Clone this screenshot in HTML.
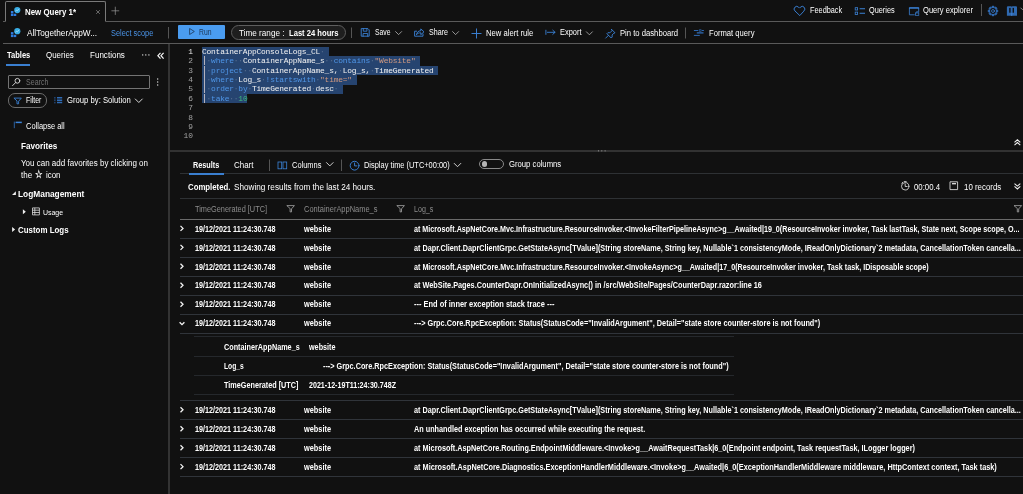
<!DOCTYPE html>
<html lang="en">
<head>
<meta charset="utf-8">
<title>Logs</title>
<style>
*{box-sizing:border-box;margin:0;padding:0}
html,body{width:1023px;height:494px;overflow:hidden;background:#111111}
body{position:relative;font-family:"Liberation Sans",sans-serif;color:#fff;-webkit-font-smoothing:antialiased}
.t{position:absolute;white-space:pre;line-height:12px;height:12px;transform-origin:0 50%}
.m{font-family:"Liberation Mono",monospace}
#app{position:absolute;left:0;top:0;width:1023px;height:494px;will-change:transform}
.a{position:absolute}
svg{position:absolute;overflow:visible}
</style>
</head>
<body>
<div id="app">
<style>
.hl{position:absolute;height:1px;background:#30343a}
.cl{position:absolute;left:202px;height:10px;line-height:10px;font-size:7.9px;letter-spacing:-0.196px;white-space:pre;color:#f2f2f2}
.ln{position:absolute;left:172px;width:20.7px;text-align:right;height:10px;line-height:10px;font-size:7.9px;letter-spacing:-0.196px;color:#a2a2a2}
.cl i{font-style:normal;color:rgba(255,255,255,.22)}.p{display:inline-block;transform:scaleY(1.2);color:#f6e6e2}
.k{color:#4f96e8}.s{color:#cf9880}.n{color:#3fba7c}
</style>
<!-- tab strip -->
<div class="a" style="left:2.5px;top:21px;width:1020.5px;height:1px;background:#5a5a5a"></div>
<div class="a" style="left:5px;top:1px;width:101px;height:21px;border:1px solid #7a7a7a;border-bottom:1px solid #111;border-radius:2px 2px 0 0;background:#111"></div>
<div class="a" style="left:2.5px;top:43px;width:1020.5px;height:1px;background:#5a5a5a"></div>
<!-- left/right splitter -->
<div class="a" style="left:168px;top:44px;width:2px;height:450px;background:#333"></div>
<!-- run button & time pill -->
<div class="a" style="left:178px;top:25px;width:47px;height:14px;background:#4a9cf0;border-radius:1px"></div>
<div class="a" style="left:231px;top:25px;width:114.5px;height:14.5px;border:1px solid #5e5e5e;border-radius:8px;background:#1e1e1e"></div>
<!-- search box & filter pill -->
<div class="a" style="left:8.3px;top:75.2px;width:141.7px;height:13.4px;border:1px solid #747474;border-radius:1px"></div>
<div class="a" style="left:8.3px;top:93.2px;width:38.7px;height:14.4px;border:1px solid #6e6e6e;border-radius:7px"></div>
<div class="a" style="left:6px;top:64px;width:24px;height:2px;background:#3a7fd0"></div>
<!-- editor -->
<svg width="1023" height="494" viewBox="0 0 1023 494" style="left:0;top:0" shape-rendering="crispEdges">
<g fill="#264470">
<rect x="202" y="46.80" width="127.26" height="9.7"/>
<rect x="202" y="56.20" width="218.16" height="9.7"/>
<rect x="202" y="65.60" width="236.34" height="9.7"/>
<rect x="202" y="75.00" width="154.53" height="9.7"/>
<rect x="202" y="84.40" width="140.90" height="9.7"/>
<rect x="202" y="93.80" width="45.45" height="9.4"/>
</g>
</svg>
<span class="ln m" style="top:46.70px;color:#e6e6e6">1</span>
<span class="ln m" style="top:56.10px">2</span>
<span class="ln m" style="top:65.50px">3</span>
<span class="ln m" style="top:74.90px">4</span>
<span class="ln m" style="top:84.30px">5</span>
<span class="ln m" style="top:93.70px">6</span>
<span class="ln m" style="top:103.10px">7</span>
<span class="ln m" style="top:112.50px">8</span>
<span class="ln m" style="top:121.90px">9</span>
<span class="ln m" style="top:131.30px">10</span>
<span class="cl m" style="top:46.70px">ContainerAppConsoleLogs_CL<i>·</i></span>
<span class="cl m" style="top:56.10px"><span class="p">|</span><i>·</i><span class="k">where</span><i>·</i><i>·</i>ContainerAppName_s<i>·</i><i>·</i><span class="k">contains</span><i>·</i><span class="s">"Website"</span></span>
<span class="cl m" style="top:65.50px"><span class="p">|</span><i>·</i><span class="k">project</span><i>·</i><i>·</i>ContainerAppName_s,<i>·</i>Log_s,<i>·</i>TimeGenerated</span>
<span class="cl m" style="top:74.90px"><span class="p">|</span><i>·</i><span class="k">where</span><i>·</i>Log_s<i>·</i><span class="k">!startswith</span><i>·</i><span class="s">"time="</span></span>
<span class="cl m" style="top:84.30px"><span class="p">|</span><i>·</i><span class="k">order</span><i>·</i><span class="k">by</span><i>·</i>TimeGenerated<i>·</i>desc<i>·</i></span>
<span class="cl m" style="top:93.70px"><span class="p">|</span><i>·</i><span class="k">take</span><i>·</i><i>·</i><span class="n">10</span></span>
<!-- editor/results splitter -->
<div class="a" style="left:170px;top:149.6px;width:853px;height:2.6px;background:#323232"></div>
<!-- results lines -->
<div class="hl" style="left:179.5px;top:173.4px;width:843.5px;background:#2e3134"></div>
<div class="a" style="left:188.5px;top:173px;width:35.3px;height:1.5px;background:#3a7fd0"></div>
<div class="hl" style="left:179.5px;top:198px;width:843.5px;background:#2e3134"></div>
<div class="hl" style="left:179.5px;top:219px;width:843.5px;background:#6a6a6a"></div>
<div class="hl" style="left:179.5px;top:238px;width:843.5px"></div>
<div class="hl" style="left:179.5px;top:257px;width:843.5px"></div>
<div class="hl" style="left:179.5px;top:276px;width:843.5px"></div>
<div class="hl" style="left:179.5px;top:295px;width:843.5px"></div>
<div class="hl" style="left:179.5px;top:314px;width:843.5px"></div>
<div class="hl" style="left:179.5px;top:333px;width:843.5px"></div>
<div class="hl" style="left:194.4px;top:336.3px;width:539.2px;background:#25282c"></div>
<div class="hl" style="left:194.4px;top:356.1px;width:539.2px;background:#25282c"></div>
<div class="hl" style="left:194.4px;top:374.8px;width:539.2px;background:#25282c"></div>
<div class="hl" style="left:194.4px;top:393.5px;width:539.2px;background:#25282c"></div>
<div class="hl" style="left:179.5px;top:399.8px;width:843.5px"></div>
<div class="hl" style="left:179.5px;top:418.8px;width:843.5px"></div>
<div class="hl" style="left:179.5px;top:437.8px;width:843.5px"></div>
<div class="hl" style="left:179.5px;top:456.9px;width:843.5px"></div>
<div class="hl" style="left:179.5px;top:475.8px;width:843.5px"></div>
<!-- toggle -->
<div class="a" style="left:478.9px;top:158.6px;width:24.9px;height:10.7px;border:1px solid #8a8a8a;border-radius:5.4px"></div>
<div class="a" style="left:481.9px;top:161.3px;width:5.4px;height:5.4px;background:#b4b4b4;border-radius:50%"></div>
<!-- ICONS -->
<svg width="1023" height="494" viewBox="0 0 1023 494" style="left:0;top:0" fill="none" stroke-linecap="round" stroke-linejoin="round">
<!-- separators -->
<g stroke="#555" stroke-width="1" stroke-linecap="butt">
<path d="M168.5 27V38.5M351.5 27.5V38M685.5 27.5V38.5M981.5 4V16M269.5 159.5V171M341.5 159.5V171"/>
</g>
<!-- ICONS-BEGIN -->
<!-- app icons (tab + scope) -->
<g>
<circle cx="17.300" cy="10.100" r="3.100" fill="#38aee6" stroke="none"/>
<path d="M15.6 11.2l1-1.2.9.7 1.2-1.6" stroke="#d8f0ff" stroke-width=".6"/>
<g fill="#2f7de0" stroke="none"><rect x="10.900" y="11" width="2.500" height="2.400"/><rect x="10.900" y="13.700" width="2.500" height="2.300"/><rect x="13.750" y="13.700" width="2.500" height="2.300"/></g>
</g>
<g transform="translate(0 21.1)">
<circle cx="17.300" cy="10.100" r="3.100" fill="#38aee6" stroke="none"/>
<path d="M15.6 11.2l1-1.2.9.7 1.2-1.6" stroke="#d8f0ff" stroke-width=".6"/>
<g fill="#2f7de0" stroke="none"><rect x="10.900" y="11" width="2.500" height="2.400"/><rect x="10.900" y="13.700" width="2.500" height="2.300"/><rect x="13.750" y="13.700" width="2.500" height="2.300"/></g>
</g>
<!-- tab close + new tab -->
<path d="M96.400 10.400l3.200 3.200M99.600 10.400l-3.200 3.200" stroke="#8c8c8c" stroke-width=".7"/>
<path d="M115.300 7.100v7.400M111.800 10.800h7" stroke="#9a9a9a" stroke-width=".7"/>
<!-- heart -->
<path d="M799.5 15.3l-4.6-4.4a2.6 2.6 0 0 1 0-3.7 2.6 2.6 0 0 1 3.7 0l.9.9.9-.9a2.6 2.6 0 0 1 3.7 0 2.6 2.6 0 0 1 0 3.7z" stroke="#3b83d8" stroke-width=".95"/>
<!-- queries icon -->
<g stroke="#3b83d8" stroke-width=".8" stroke-linejoin="miter"><rect x="855.200" y="7.700" width="2.400" height="2.300"/><rect x="855.200" y="12.100" width="2.400" height="2.300"/><path d="M859.600 8.800h5.400M859.600 13.200h5.400" stroke-width="1.050" stroke-linecap="butt"/></g>
<!-- query explorer icon -->
<g stroke="#3b83d8" stroke-width=".8" stroke-linejoin="miter"><path d="M914.300 14.800h-4.900V7.500h9.300v4.200"/><path d="M909.400 8.300h9.300" stroke-width=".9"/><rect x="915.600" y="12.900" width="3.200" height="2.400" stroke-width=".7"/><path d="M916.300 12.900v-.6a.9.900 0 0 1 1.800 0v.6" stroke-width=".6"/></g>
<!-- gear -->
<g><path d="M991.85 7.27L992.01 6.10L993.99 6.10L994.15 7.27L994.82 7.55L995.76 6.83L997.17 8.24L996.45 9.18L996.73 9.85L997.90 10.01L997.90 11.99L996.73 12.15L996.45 12.82L997.17 13.76L995.76 15.17L994.82 14.45L994.15 14.73L993.99 15.90L992.01 15.90L991.85 14.73L991.18 14.45L990.24 15.17L988.83 13.76L989.55 12.82L989.27 12.15L988.10 11.99L988.10 10.01L989.27 9.85L989.55 9.18L988.83 8.24L990.24 6.83L991.18 7.55z" fill="#2f69b0" stroke="#2f69b0" stroke-width=".5"/><circle cx="993.0" cy="11.0" r="2.9" fill="#111"/><circle cx="993.0" cy="11.0" r="1.45" stroke="#3b7fd0" stroke-width=".8"/></g>
<!-- book -->
<g><path d="M1006.9 7.3q0-1 1-1h3.2l.65.5.65-.5h3.600q1 0 1 1v8.500h-10.100z" fill="#2f69b0"/><rect x="1009.200" y="7.900" width="1.400" height="4.800" fill="#111"/><rect x="1012.600" y="7.900" width="1.400" height="4.800" fill="#111"/><path d="M1011.750 13.400v2.200" stroke="#4a90e2" stroke-width=".7"/></g>
<path d="M1020.800 8l1.600 1.600 1.600-1.600" stroke="#aaa" stroke-width=".8"/>
<!-- run play -->
<path d="M189.600 28.900v5.600l4.400-2.800z" stroke="#1c3554" stroke-width=".8"/>
<!-- save -->
<g stroke="#3b83d8" stroke-width=".9"><path d="M361.6 28.6h6.3l1.3 1.3v6.3h-7.6z"/><path d="M363.3 28.6v2.6h3.6v-2.6" stroke-width=".85"/><path d="M363.1 36.2v-2.7h4.6v2.7" stroke-width=".85"/></g>
<!-- chevrons (toolbar) -->
<g stroke="#b8b8b8" stroke-width=".8"><path d="M395.6 31.6l3 3 3-3M452.6 31.6l3 3 3-3M586.4 31.8l3 3 3-3"/></g>
<!-- share -->
<g stroke="#3b83d8" stroke-width=".9"><path d="M416.6 31.2h-2v5h8.4v-2.2"/><path d="M416.6 34.4c.3-2.4 1.8-3.6 4.2-3.6v-1.9l3.2 2.9-3.2 2.9v-1.9c-1.9 0-3.2.5-4.2 1.600z"/></g>
<!-- plus -->
<path d="M476.5 28.9v9.2M471.9 33.5h9.2" stroke="#3b83d8" stroke-width=".95"/>
<!-- export -->
<path d="M545.9 30.2v4.2M547.4 32.3h7.6M552.8 30.2l2.2 2.1-2.2 2.100" stroke="#3b83d8" stroke-width=".9"/>
<!-- pin -->
<g stroke="#3b83d8" stroke-width=".9"><path d="M611.600 29.4l3.400 3.400-1 .3-1.900 1.900.1 2-1 1-4.300-4.300 1-1 2 .1 1.900-1.900z"/><path d="M608.500 35.300l-2.800 2.800"/></g>
<!-- format -->
<g stroke="#3273c4" stroke-width=".9" stroke-linecap="butt"><path d="M693.900 30.500h4.300M701.900 30.500h2M693.900 35.400h5.900"/><path d="M696.800 32.900h6.700" stroke-width="1.200"/><rect x="699.300" y="29.700" width="1.900" height="1.700" stroke-width=".6"/></g>
<!-- left: ellipsis, collapse chevrons -->
<g fill="#e6e6e6" stroke="none"><circle cx="142.700" cy="54.900" r=".7"/><circle cx="145.800" cy="54.900" r=".7"/><circle cx="148.900" cy="54.900" r=".7"/>
<circle cx="157.700" cy="79" r=".65"/><circle cx="157.700" cy="82" r=".65"/><circle cx="157.700" cy="85" r=".65"/></g>
<path d="M160.500 52.800l-2.600 2.900 2.600 2.900M163.600 52.800l-2.600 2.900 2.600 2.900" stroke="#f4f4f4" stroke-width="1.250" stroke-linecap="butt" stroke-linejoin="miter"/>
<!-- search icon -->
<g stroke="#e0e0e0" stroke-width=".9"><circle cx="17.400" cy="80.800" r="2.400"/><path d="M15.600 82.600l-3 3"/></g>
<!-- filter funnel -->
<path d="M14.300 98.100h7l-2.700 3.200v2.500h-1.600v-2.500z" stroke="#3b83d8" stroke-width=".9"/>
<!-- group icon -->
<g stroke="#2f6bb5" stroke-width="1.500" stroke-linecap="butt"><path d="M57 97.800h5.200M57 100.200h5.200M57 102.600h5.200"/><path d="M54.900 97v6.400" stroke="#2a5fa3" stroke-width="1" stroke-dasharray="1.600 .8"/></g>
<path d="M135.300 99l3.500 3.500 3.500-3.500" stroke="#d8d8d8" stroke-width="1"/>
<!-- collapse all icon -->
<path d="M14.300 121.600v6.600" stroke="#2f6bb4" stroke-width=".9" stroke-linecap="butt"/><path d="M15.600 122.400h6.200" stroke="#3b83d8" stroke-width="1.500" stroke-linecap="butt"/>
<!-- tree arrows -->
<g fill="#f0f0f0" stroke="none"><path d="M15.900 191.200v3.800h-3.900z"/><path d="M22.900 209.200l2.900 2.500-2.900 2.500z"/><path d="M12.100 226.900l3 2.600-3 2.600z"/></g>
<!-- table icon -->
<g stroke="#e8e8e8" stroke-width=".75" stroke-linecap="butt"><rect x="32.500" y="207.900" width="6.900" height="7"/><path d="M32.500 210.200h6.900M32.500 212.500h6.900M34.800 207.900v7"/></g>
<!-- columns icon -->
<g stroke="#3b83d8" stroke-width=".8" stroke-linejoin="miter"><rect x="278" y="162" width="3.700" height="6.800"/><rect x="283" y="162" width="3.700" height="6.800"/></g>
<path d="M326.500 162.600l3.300 3.300 3.300-3.300M454.200 163.400l3.300 3.300 3.300-3.300" stroke="#d8d8d8" stroke-width=".95"/>
<!-- clock -->
<g stroke="#3b83d8" stroke-width=".95"><circle cx="354.600" cy="165.700" r="4.400"/><path d="M354.600 163v2.900h2.300"/></g>
<!-- header filter icons -->
<g stroke="#a8a8a8" stroke-width=".8"><path d="M287.200 205.600h7.200l-2.900 3.300v3h-1.400v-3z"/><path d="M397.200 205.600h7.200l-2.900 3.300v3h-1.400v-3z"/><path d="M1014.400 205.600h7.200l-2.900 3.300v3h-1.400v-3z"/></g>
<!-- double chevrons -->
<g stroke="#f0f0f0" stroke-width="1.100" stroke-linecap="butt" stroke-linejoin="miter"><path d="M1014.500 142.300l2.900-2.500 2.900 2.500M1014.500 145.100l2.900-2.500 2.900 2.500"/><path d="M1014.500 183.600l2.900 2.500 2.900-2.500M1014.500 186.400l2.900 2.500 2.900-2.500"/></g>
<!-- stopwatch -->
<g stroke="#e0e0e0" stroke-width=".85"><circle cx="905.200" cy="186.300" r="3.700"/><path d="M905.200 184v2.500h1.900M904.200 181.600h2M901.800 183.200l.9-.9"/></g>
<!-- records icon -->
<g stroke="#e0e0e0" stroke-width=".85"><rect x="950.400" y="181.800" width="7.200" height="7.800"/><path d="M952 183.700h4" stroke-width="1.300" stroke-linecap="butt"/></g>
<!-- splitter dots -->
<g fill="#9a9a9a" stroke="none"><circle cx="598.500" cy="150.800" r=".6"/><circle cx="601.800" cy="150.800" r=".6"/><circle cx="605.100" cy="150.800" r=".6"/></g>
<!-- row chevrons -->
<g stroke="#f4f4f4" stroke-width="1.300" stroke-linecap="butt" stroke-linejoin="miter">
<path d="M180.500 225.900l2.500 2.500-2.500 2.500"/>
<path transform="translate(0 18.95)" d="M180.500 225.900l2.500 2.500-2.500 2.500"/><path transform="translate(0 37.9)" d="M180.500 225.900l2.500 2.500-2.500 2.500"/><path transform="translate(0 56.85)" d="M180.500 225.900l2.500 2.500-2.500 2.500"/><path transform="translate(0 75.8)" d="M180.500 225.900l2.500 2.500-2.500 2.500"/>
<path d="M179.600 322.300l2.400 2.400 2.400-2.400"/>
<path transform="translate(0 181.4)" d="M180.500 225.900l2.500 2.500-2.500 2.500"/><path transform="translate(0 200.35)" d="M180.500 225.900l2.500 2.500-2.500 2.500"/><path transform="translate(0 219.3)" d="M180.500 225.900l2.500 2.500-2.500 2.500"/><path transform="translate(0 238.25)" d="M180.500 225.900l2.500 2.500-2.500 2.500"/>
</g>
<!-- ICONS-END -->
</svg>

<span class="t" style="left:25px;top:6.00px;font-size:8.3px;color:#ffffff;font-weight:700;transform:scaleX(0.9533);">New Query 1*</span>
<span class="t" style="left:809.5px;top:4.30px;font-size:8.3px;color:#ffffff;transform:scaleX(0.8837);">Feedback</span>
<span class="t" style="left:869.3px;top:4.30px;font-size:8.3px;color:#ffffff;transform:scaleX(0.8843);">Queries</span>
<span class="t" style="left:923px;top:4.30px;font-size:8.3px;color:#ffffff;transform:scaleX(0.9112);">Query explorer</span>
<span class="t" style="left:26.7px;top:27.00px;font-size:8.8px;color:#ffffff;transform:scaleX(0.9357);">AllTogetherAppW...</span>
<span class="t" style="left:110.75px;top:27.00px;font-size:8.3px;color:#4a93e6;transform:scaleX(0.8892);">Select scope</span>
<span class="t" style="left:198.75px;top:25.50px;font-size:8.3px;color:#1c3554;transform:scaleX(0.8205);">Run</span>
<span class="t" style="left:238.75px;top:27.40px;font-size:8.3px;color:#ffffff;transform:scaleX(0.9835);">Time range :</span>
<span class="t" style="left:288.5px;top:27.40px;font-size:8.3px;color:#ffffff;font-weight:700;transform:scaleX(0.9175);">Last 24 hours</span>
<span class="t" style="left:374.5px;top:26.00px;font-size:8.3px;color:#ffffff;transform:scaleX(0.8192);">Save</span>
<span class="t" style="left:428.5px;top:26.00px;font-size:8.3px;color:#ffffff;transform:scaleX(0.8582);">Share</span>
<span class="t" style="left:485.75px;top:26.75px;font-size:8.3px;color:#ffffff;transform:scaleX(0.9231);">New alert rule</span>
<span class="t" style="left:559.5px;top:26.00px;font-size:8.3px;color:#ffffff;transform:scaleX(0.8964);">Export</span>
<span class="t" style="left:619.5px;top:27.00px;font-size:8.3px;color:#ffffff;transform:scaleX(0.9245);">Pin to dashboard</span>
<span class="t" style="left:708.5px;top:27.00px;font-size:8.3px;color:#ffffff;transform:scaleX(0.9221);">Format query</span>
<span class="t" style="left:6.7px;top:49.40px;font-size:8.3px;color:#ffffff;font-weight:700;transform:scaleX(0.9076);">Tables</span>
<span class="t" style="left:45.7px;top:49.40px;font-size:8.3px;color:#ffffff;transform:scaleX(0.9566);">Queries</span>
<span class="t" style="left:89.7px;top:49.40px;font-size:8.3px;color:#ffffff;transform:scaleX(0.9699);">Functions</span>
<span class="t" style="left:26px;top:76.20px;font-size:8.3px;color:#727272;transform:scaleX(0.8518);">Search</span>
<span class="t" style="left:25.7px;top:94.30px;font-size:8.3px;color:#ffffff;transform:scaleX(0.8298);">Filter</span>
<span class="t" style="left:66.5px;top:94.30px;font-size:8.3px;color:#ffffff;transform:scaleX(0.9268);">Group by: Solution</span>
<span class="t" style="left:25.8px;top:119.80px;font-size:8.3px;color:#ffffff;transform:scaleX(0.9023);">Collapse all</span>
<span class="t" style="left:21px;top:140.30px;font-size:8.3px;color:#ffffff;font-weight:700;transform:scaleX(0.9867);">Favorites</span>
<span class="t" style="left:21px;top:157.20px;font-size:8.3px;color:#ffffff;transform:scaleX(0.9650);">You can add favorites by clicking on</span>
<span class="t" style="left:20.7px;top:168.80px;font-size:8.3px;color:#ffffff;transform:scaleX(0.9613);">the</span>
<span class="t" style="left:35.4px;top:168.00px;font-size:10.5px;color:#ffffff;font-weight:700;transform:scaleX(0.7600);">☆</span>
<span class="t" style="left:46.1px;top:168.80px;font-size:8.3px;color:#ffffff;transform:scaleX(0.9518);">icon</span>
<span class="t" style="left:18.4px;top:187.50px;font-size:8.3px;color:#ffffff;font-weight:700;transform:scaleX(1.0057);">LogManagement</span>
<span class="t" style="left:42.9px;top:206.70px;font-size:7.8px;color:#ffffff;transform:scaleX(0.8915);">Usage</span>
<span class="t" style="left:18.4px;top:223.80px;font-size:8.3px;color:#ffffff;font-weight:700;transform:scaleX(0.9544);">Custom Logs</span>
<span class="t" style="left:193.25px;top:158.75px;font-size:8.3px;color:#ffffff;font-weight:700;transform:scaleX(0.8755);">Results</span>
<span class="t" style="left:233.75px;top:158.75px;font-size:8.3px;color:#ffffff;transform:scaleX(0.9607);">Chart</span>
<span class="t" style="left:291.5px;top:158.75px;font-size:8.3px;color:#ffffff;transform:scaleX(0.9008);">Columns</span>
<span class="t" style="left:363.75px;top:159.00px;font-size:8.3px;color:#ffffff;transform:scaleX(0.8956);">Display time (UTC+00:00)</span>
<span class="t" style="left:508.8px;top:157.50px;font-size:8.3px;color:#ffffff;transform:scaleX(0.9277);">Group columns</span>
<span class="t" style="left:188.25px;top:180.75px;font-size:8.3px;color:#ffffff;font-weight:700;transform:scaleX(0.9405);">Completed.</span>
<span class="t" style="left:233.75px;top:180.75px;font-size:8.3px;color:#ffffff;transform:scaleX(0.9849);">Showing results from the last 24 hours.</span>
<span class="t" style="left:914px;top:180.60px;font-size:8.3px;color:#ffffff;transform:scaleX(0.9391);">00:00.4</span>
<span class="t" style="left:963.7px;top:180.60px;font-size:8.3px;color:#ffffff;transform:scaleX(0.9515);">10 records</span>
<span class="t" style="left:194.5px;top:202.75px;font-size:8.3px;color:#8d8d8d;transform:scaleX(0.8855);">TimeGenerated [UTC]</span>
<span class="t" style="left:303.5px;top:202.75px;font-size:8.3px;color:#8d8d8d;transform:scaleX(0.9003);">ContainerAppName_s</span>
<span class="t" style="left:414.2px;top:202.75px;font-size:8.3px;color:#8d8d8d;transform:scaleX(0.8536);">Log_s</span>
<span class="t" style="left:194.9px;top:222.60px;font-size:8.3px;color:#ffffff;font-weight:700;transform:scaleX(0.8691);">19/12/2021 11:24:30.748</span>
<span class="t" style="left:303.7px;top:222.60px;font-size:8.3px;color:#ffffff;font-weight:700;transform:scaleX(0.8871);">website</span>
<span class="t" style="left:414.2px;top:222.60px;font-size:8.3px;color:#ffffff;font-weight:700;transform:scaleX(0.8646);">at Microsoft.AspNetCore.Mvc.Infrastructure.ResourceInvoker.&lt;InvokeFilterPipelineAsync&gt;g__Awaited|19_0(ResourceInvoker invoker, Task lastTask, State next, Scope scope, O...</span>
<span class="t" style="left:194.9px;top:241.50px;font-size:8.3px;color:#ffffff;font-weight:700;transform:scaleX(0.8691);">19/12/2021 11:24:30.748</span>
<span class="t" style="left:303.7px;top:241.50px;font-size:8.3px;color:#ffffff;font-weight:700;transform:scaleX(0.8871);">website</span>
<span class="t" style="left:414.2px;top:241.50px;font-size:8.3px;color:#ffffff;font-weight:700;transform:scaleX(0.8731);">at Dapr.Client.DaprClientGrpc.GetStateAsync[TValue](String storeName, String key, Nullable`1 consistencyMode, IReadOnlyDictionary`2 metadata, CancellationToken cancella...</span>
<span class="t" style="left:194.9px;top:260.50px;font-size:8.3px;color:#ffffff;font-weight:700;transform:scaleX(0.8691);">19/12/2021 11:24:30.748</span>
<span class="t" style="left:303.7px;top:260.50px;font-size:8.3px;color:#ffffff;font-weight:700;transform:scaleX(0.8871);">website</span>
<span class="t" style="left:414.2px;top:260.50px;font-size:8.3px;color:#ffffff;font-weight:700;transform:scaleX(0.8655);">at Microsoft.AspNetCore.Mvc.Infrastructure.ResourceInvoker.&lt;InvokeAsync&gt;g__Awaited|17_0(ResourceInvoker invoker, Task task, IDisposable scope)</span>
<span class="t" style="left:194.9px;top:279.40px;font-size:8.3px;color:#ffffff;font-weight:700;transform:scaleX(0.8691);">19/12/2021 11:24:30.748</span>
<span class="t" style="left:303.7px;top:279.40px;font-size:8.3px;color:#ffffff;font-weight:700;transform:scaleX(0.8871);">website</span>
<span class="t" style="left:414.2px;top:279.40px;font-size:8.3px;color:#ffffff;font-weight:700;transform:scaleX(0.8791);">at WebSite.Pages.CounterDapr.OnInitializedAsync() in /src/WebSite/Pages/CounterDapr.razor:line 16</span>
<span class="t" style="left:194.9px;top:298.40px;font-size:8.3px;color:#ffffff;font-weight:700;transform:scaleX(0.8691);">19/12/2021 11:24:30.748</span>
<span class="t" style="left:303.7px;top:298.40px;font-size:8.3px;color:#ffffff;font-weight:700;transform:scaleX(0.8871);">website</span>
<span class="t" style="left:414.2px;top:298.40px;font-size:8.3px;color:#ffffff;font-weight:700;transform:scaleX(0.8983);">--- End of inner exception stack trace ---</span>
<span class="t" style="left:194.9px;top:317.40px;font-size:8.3px;color:#ffffff;font-weight:700;transform:scaleX(0.8691);">19/12/2021 11:24:30.748</span>
<span class="t" style="left:303.7px;top:317.40px;font-size:8.3px;color:#ffffff;font-weight:700;transform:scaleX(0.8871);">website</span>
<span class="t" style="left:414.2px;top:317.40px;font-size:8.3px;color:#ffffff;font-weight:700;transform:scaleX(0.8806);">---&gt; Grpc.Core.RpcException: Status(StatusCode="InvalidArgument", Detail="state store counter-store is not found")</span>
<span class="t" style="left:194.9px;top:404.00px;font-size:8.3px;color:#ffffff;font-weight:700;transform:scaleX(0.8691);">19/12/2021 11:24:30.748</span>
<span class="t" style="left:303.7px;top:404.00px;font-size:8.3px;color:#ffffff;font-weight:700;transform:scaleX(0.8871);">website</span>
<span class="t" style="left:414.2px;top:404.00px;font-size:8.3px;color:#ffffff;font-weight:700;transform:scaleX(0.8731);">at Dapr.Client.DaprClientGrpc.GetStateAsync[TValue](String storeName, String key, Nullable`1 consistencyMode, IReadOnlyDictionary`2 metadata, CancellationToken cancella...</span>
<span class="t" style="left:194.9px;top:423.00px;font-size:8.3px;color:#ffffff;font-weight:700;transform:scaleX(0.8691);">19/12/2021 11:24:30.748</span>
<span class="t" style="left:303.7px;top:423.00px;font-size:8.3px;color:#ffffff;font-weight:700;transform:scaleX(0.8871);">website</span>
<span class="t" style="left:414.2px;top:423.00px;font-size:8.3px;color:#ffffff;font-weight:700;transform:scaleX(0.8756);">An unhandled exception has occurred while executing the request.</span>
<span class="t" style="left:194.9px;top:442.00px;font-size:8.3px;color:#ffffff;font-weight:700;transform:scaleX(0.8691);">19/12/2021 11:24:30.748</span>
<span class="t" style="left:303.7px;top:442.00px;font-size:8.3px;color:#ffffff;font-weight:700;transform:scaleX(0.8871);">website</span>
<span class="t" style="left:414.2px;top:442.00px;font-size:8.3px;color:#ffffff;font-weight:700;transform:scaleX(0.8772);">at Microsoft.AspNetCore.Routing.EndpointMiddleware.&lt;Invoke&gt;g__AwaitRequestTask|6_0(Endpoint endpoint, Task requestTask, ILogger logger)</span>
<span class="t" style="left:194.9px;top:461.00px;font-size:8.3px;color:#ffffff;font-weight:700;transform:scaleX(0.8691);">19/12/2021 11:24:30.748</span>
<span class="t" style="left:303.7px;top:461.00px;font-size:8.3px;color:#ffffff;font-weight:700;transform:scaleX(0.8871);">website</span>
<span class="t" style="left:414.2px;top:461.00px;font-size:8.3px;color:#ffffff;font-weight:700;transform:scaleX(0.8831);">at Microsoft.AspNetCore.Diagnostics.ExceptionHandlerMiddleware.&lt;Invoke&gt;g__Awaited|6_0(ExceptionHandlerMiddleware middleware, HttpContext context, Task task)</span>
<span class="t" style="left:223.8px;top:340.50px;font-size:8.3px;color:#ffffff;font-weight:700;transform:scaleX(0.8733);">ContainerAppName_s</span>
<span class="t" style="left:308.7px;top:340.50px;font-size:8.3px;color:#ffffff;font-weight:700;transform:scaleX(0.8706);">website</span>
<span class="t" style="left:223.8px;top:359.80px;font-size:8.3px;color:#ffffff;font-weight:700;transform:scaleX(0.8102);">Log_s</span>
<span class="t" style="left:323.4px;top:359.80px;font-size:8.3px;color:#ffffff;font-weight:700;transform:scaleX(0.8793);">---&gt; Grpc.Core.RpcException: Status(StatusCode="InvalidArgument", Detail="state store counter-store is not found")</span>
<span class="t" style="left:223.8px;top:378.70px;font-size:8.3px;color:#ffffff;font-weight:700;transform:scaleX(0.8738);">TimeGenerated [UTC]</span>
<span class="t" style="left:308.7px;top:378.70px;font-size:8.3px;color:#ffffff;font-weight:700;transform:scaleX(0.8573);">2021-12-19T11:24:30.748Z</span>
</div>
</body>
</html>
